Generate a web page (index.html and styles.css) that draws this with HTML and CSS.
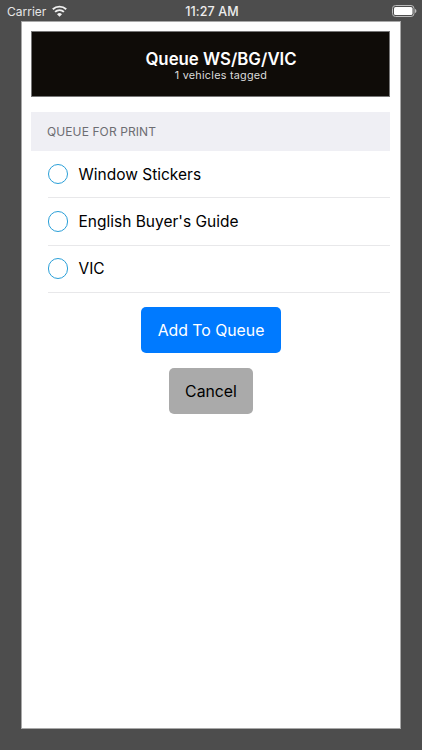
FILE: index.html
```html
<!DOCTYPE html>
<html lang="en">
<head>
<meta charset="utf-8">
<title>Queue WS/BG/VIC</title>
<link rel="stylesheet" href="styles.css">
</head>
<body>
<div class="status">
  <div class="status-left">
    <span>Carrier</span>
    <svg class="wifi" width="15" height="12" viewBox="0 0 15 12"><path d="M.8 4.300a9.600 9.600 0 0 1 13.400 0" fill="none" stroke="#f0f0f0" stroke-width="1.900"/><path d="M3.100 6.900a6.300 6.300 0 0 1 8.800 0" fill="none" stroke="#f0f0f0" stroke-width="1.900"/><path d="M7.500 11.800 5 9.200a3.500 3.500 0 0 1 5 0z" fill="#f0f0f0"/></svg>
  </div>
  <div class="status-time">11:27 AM</div>
  <div class="status-right">
    <svg width="25" height="12" viewBox="0 0 25 12"><rect x=".5" y=".5" width="21.500" height="11" rx="3" fill="none" stroke="#bbb"/><rect x="2" y="2" width="18.500" height="8" rx="1.600" fill="#fff"/><path d="M23 4v4c.9-.3 1.400-1.100 1.400-2s-.5-1.700-1.400-2z" fill="#bbb"/></svg>
  </div>
</div>
<main class="sheet">
  <header class="banner">
    <h1>Queue WS/BG/VIC</h1>
    <p>1 vehicles tagged</p>
  </header>
  <div class="section-head">QUEUE FOR PRINT</div>
  <ul class="options">
    <li><span class="radio"></span><span class="label">Window Stickers</span></li>
    <li><span class="radio"></span><span class="label">English Buyer's Guide</span></li>
    <li><span class="radio"></span><span class="label">VIC</span></li>
  </ul>
  <div class="actions">
    <button class="btn primary">Add To Queue</button>
    <button class="btn secondary">Cancel</button>
  </div>
</main>
</body>
</html>
```
FILE: styles.css
```css
* { box-sizing: border-box; }
html, body { margin: 0; height: 100%; }
body {
  width: 422px;
  height: 750px;
  overflow: hidden;
  background: #4d4d4d;
  font-family: Inter, "Liberation Sans", sans-serif;
  display: flex;
  flex-direction: column;
}
.status {
  height: 21px;
  flex: none;
  display: grid;
  grid-template-columns: 1fr auto 1fr;
  align-items: center;
  padding: 1px 5px 0 7px;
  color: #e6e6e6;
  font-size: 12px;
}
.status-left { display: flex; align-items: center; gap: 6px; }
.wifi { margin-top: -1px; }
.status-time { font-weight: 500; font-size: 12.500px; letter-spacing: 0.100px; color: #eee; }
.status-right { display: flex; justify-content: flex-end; }
.sheet {
  flex: none;
  height: 708px;
  margin: 0 21px;
  background: #fff;
  border: 1px solid #a8a8a8;
  padding: 9px 10px 0 9px;
  display: flex;
  flex-direction: column;
}
.banner {
  height: 66px;
  flex: none;
  background: #0f0c08;
  border: 1px solid #777;
  color: #fff;
  text-align: center;
  display: flex;
  flex-direction: column;
  justify-content: center;
  padding: 3px 0 0 21px;
}
.banner h1 { margin: 0; font-size: 16.800px; line-height: 20px; font-weight: 600; }
.banner p { margin: 0; font-size: 10.800px; line-height: 14px; color: #dcdcdc; letter-spacing: 0.250px; }
.section-head {
  margin-top: 15px;
  height: 39px;
  flex: none;
  background: #efeff4;
  color: #6d6d72;
  font-size: 12px;
  line-height: 39px;
  padding-left: 16px;
  letter-spacing: 0.100px;
}
.options { list-style: none; margin: 0; padding: 0 0 0 16.500px; }
.options li {
  height: 47.300px;
  display: flex;
  align-items: center;
  gap: 10.500px;
  border-bottom: 1px solid #e8e8ea;
}
.radio {
  width: 20.500px;
  height: 20.500px;
  border: 1.500px solid #2a9fd8;
  border-radius: 50%;
  flex: none;
}
.label { font-size: 15.500px; color: #000; }
.actions {
  display: flex;
  flex-direction: column;
  align-items: center;
  gap: 15px;
  margin-top: 14.500px;
  padding-left: 1px;
}
.btn {
  height: 46px;
  border: 0;
  border-radius: 5px;
  font-family: inherit;
  font-size: 15.800px;
  padding: 0;
}
.primary { width: 140px; background: #007aff; color: #fff; }
.secondary { width: 84.500px; background: #aaaaaa; color: #000; }
```
